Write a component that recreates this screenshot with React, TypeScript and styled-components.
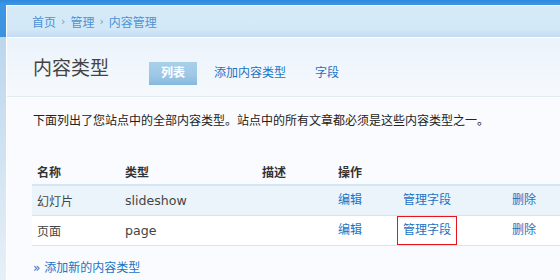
import React from 'react'
import styled, { createGlobalStyle } from 'styled-components'

const GlobalStyle = createGlobalStyle`
  html, body {
    margin: 0;
    padding: 0;
  }
  body {
    font-family: "DejaVu Sans", "Noto Sans CJK SC", sans-serif;
    font-size: 12px;
    color: #333;
  }
  a {
    text-decoration: none;
  }
`

export const Page = styled.div`
  min-height: 280px;
  box-sizing: border-box;
  padding: 5px 0 0 6px;
  background: linear-gradient(
    to bottom,
    #2f88dc 0,
    #3e97e4 5px,
    #3a92e0 37px,
    #bcd6ec 37px,
    #e6f0f8 280px
  );
  overflow: hidden;
`

export const Panel = styled.div`
  border-top: 1px solid #fff;
  border-left: 1px solid #fff;
  background: #f9fbfe;
  min-height: 274px;
`

export const Crumbs = styled.div`
  height: 31px;
  display: flex;
  align-items: center;
  gap: 5px;
  padding-left: 25px;
  background: linear-gradient(to bottom, #d6eaf8 0%, #d3e8f7 75%, #c3dbf1 100%);
  border-bottom: 1px solid #fff;
  color: #4d92d4;
`

export const Sep = styled.span`
  color: #7a9bbd;
  font-size: 11px;
`

export const Header = styled.div`
  height: 59px;
  box-sizing: border-box;
  display: flex;
  align-items: flex-start;
  padding: 18px 0 0 26px;
  background: linear-gradient(to bottom, #ebf3fb 0%, #f5f9fd 100%);
  border-bottom: 1px solid #e2eaf2;
`

export const Title = styled.h1`
  margin: 0 40px 0 0;
  font-size: 19px;
  line-height: 24px;
  font-weight: normal;
  color: #444;
`

export const Tabs = styled.div`
  display: flex;
  gap: 5px;
  margin-top: 6px;
`

export const Tab = styled.a<{ $active?: boolean }>`
  display: block;
  height: 23px;
  line-height: 23px;
  padding: 0 12px;
  color: ${({ $active }) => ($active ? '#fff' : '#1a73c4')};
  font-weight: ${({ $active }) => ($active ? 'bold' : 'normal')};
  background: ${({ $active }) =>
    $active ? 'linear-gradient(to bottom, #a9d0ea 0%, #9cc7e6 60%, #86b9de 100%)' : 'transparent'};
`

export const Body = styled.div`
  padding: 16px 0 0 25px;
`

export const Intro = styled.p`
  margin: 0 0 29px 1px;
  line-height: 16px;
  color: #222;
`

export const Table = styled.table`
  width: 100%;
  border-collapse: collapse;
`

export const Th = styled.th<{ $w?: number }>`
  width: ${({ $w }) => ($w ? `${$w}px` : 'auto')};
  height: 26px;
  padding: 0 0 0 5px;
  text-align: left;
  font-weight: bold;
  color: #333;
  border-bottom: 2px solid #d6e6f4;
`

export const Row = styled.tr<{ $odd?: boolean }>`
  background: ${({ $odd }) => ($odd ? '#ecf4fb' : '#fff')};
  border-bottom: 1px solid #d5e5f2;
`

export const Td = styled.td<{ $flush?: boolean; $w?: number }>`
  width: ${({ $w }) => ($w ? `${$w}px` : 'auto')};
  height: 29px;
  padding: 0 0 0 ${({ $flush }) => ($flush ? 0 : 5)}px;
  color: #444;
`

export const Code = styled.span`
  font-size: 12.6px;
`

export const Action = styled.a<{ $focus?: boolean; $bare?: boolean }>`
  display: inline-block;
  padding: 0 ${({ $bare }) => ($bare ? 0 : 5)}px;
  line-height: 27px;
  color: #1a73c4;
  outline: ${({ $focus }) => ($focus ? '1px solid #e8151b' : 'none')};
`

export const AddLink = styled.a`
  display: inline-block;
  margin: 14px 0 0 1px;
  line-height: 16px;
  color: #1a73c4;
`

const types = [
  { name: '幻灯片', type: 'slideshow', desc: '' },
  { name: '页面', type: 'page', desc: '' },
]

export default function App() {
  return (
    <>
      <GlobalStyle />
      <Page>
        <Panel>
          <Crumbs>
            <span>首页</span>
            <Sep>›</Sep>
            <span>管理</span>
            <Sep>›</Sep>
            <span>内容管理</span>
          </Crumbs>
          <Header>
            <Title>内容类型</Title>
            <Tabs>
              <Tab $active>列表</Tab>
              <Tab>添加内容类型</Tab>
              <Tab>字段</Tab>
            </Tabs>
          </Header>
          <Body>
            <Intro>下面列出了您站点中的全部内容类型。站点中的所有文章都必须是这些内容类型之一。</Intro>
            <Table>
              <thead>
                <tr>
                  <Th $w={83}>名称</Th>
                  <Th $w={132}>类型</Th>
                  <Th $w={71}>描述</Th>
                  <Th colSpan={3}>操作</Th>
                </tr>
              </thead>
              <tbody>
                {types.map((t, i) => (
                  <Row key={t.type} $odd={i % 2 === 0}>
                    <Td>{t.name}</Td>
                    <Td><Code>{t.type}</Code></Td>
                    <Td>{t.desc}</Td>
                    <Td $w={60}>
                      <Action $bare>编辑</Action>
                    </Td>
                    <Td $flush $w={109}>
                      <Action $focus={i === 1}>管理字段</Action>
                    </Td>
                    <Td>
                      <Action $bare>删除</Action>
                    </Td>
                  </Row>
                ))}
              </tbody>
            </Table>
            <AddLink>» 添加新的内容类型</AddLink>
          </Body>
        </Panel>
      </Page>
    </>
  )
}
